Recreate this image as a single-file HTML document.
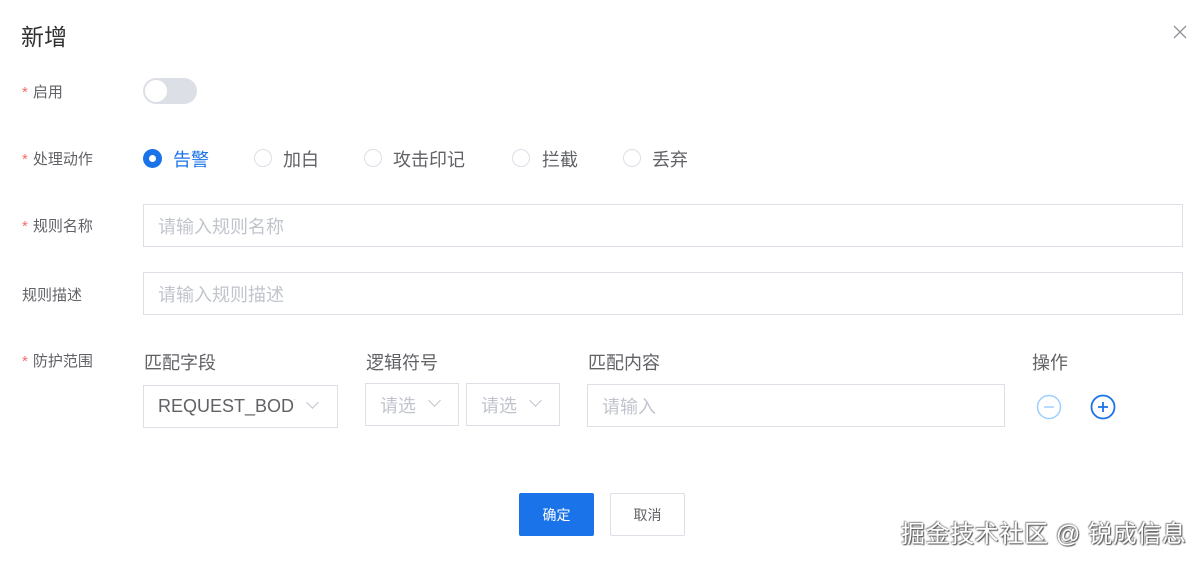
<!DOCTYPE html>
<html><head><meta charset="utf-8"><style>
*{box-sizing:border-box;margin:0;padding:0}
body{width:1204px;height:562px;background:#fff;font-family:"Liberation Sans","Noto Sans CJK SC",sans-serif;color:#606266;position:relative;overflow:hidden}
.a{position:absolute}
.lbl{font-size:15px;color:#606266}
.st{color:#f56c6c;margin-right:5px}
.inp{position:absolute;border:1px solid #dcdfe6;background:#fff;font-size:18px;color:#c0c4cc;padding-left:14px;display:flex;align-items:center}
.rd{position:absolute;width:18px;height:18px;border:1px solid #dcdfe6;border-radius:50%}
.rt{position:absolute;font-size:18px;color:#606266}
.chev{position:absolute;width:9px;height:9px;border-right:1px solid #c0c4cc;border-bottom:1px solid #c0c4cc;transform:rotate(45deg)}
</style></head><body>
<div class="a" style="left:21px;top:18px;font-size:23px;color:#303133">新增</div>
<svg class="a" style="left:1173px;top:25px" width="14" height="14"><path d="M1 1L13 13M13 1L1 13" stroke="#909399" stroke-width="1.3"/></svg>

<div class="a lbl" style="left:22px;top:81px"><span class="st">*</span>启用</div>
<div class="a" style="left:143px;top:78px;width:54px;height:26px;border-radius:13px;background:#dcdfe6"></div>
<div class="a" style="left:145px;top:80px;width:22px;height:22px;border-radius:50%;background:#fff"></div>

<div class="a lbl" style="left:22px;top:148px"><span class="st">*</span>处理动作</div>
<div class="a" style="left:143px;top:149px;width:19px;height:19px;border-radius:50%;background:#1a73e8"></div>
<div class="a" style="left:149px;top:155px;width:7px;height:7px;border-radius:50%;background:#fff"></div>
<div class="rt" style="left:173px;top:146px;color:#1a73e8">告警</div>
<div class="rd" style="left:254px;top:149px"></div><div class="rt" style="left:283px;top:146px">加白</div>
<div class="rd" style="left:364px;top:149px"></div><div class="rt" style="left:393px;top:146px">攻击印记</div>
<div class="rd" style="left:512px;top:149px"></div><div class="rt" style="left:542px;top:146px">拦截</div>
<div class="rd" style="left:623px;top:149px"></div><div class="rt" style="left:652px;top:146px">丢弃</div>

<div class="a lbl" style="left:22px;top:215px"><span class="st">*</span>规则名称</div>
<div class="inp" style="left:143px;top:204px;width:1040px;height:43px">请输入规则名称</div>
<div class="a lbl" style="left:22px;top:284px">规则描述</div>
<div class="inp" style="left:143px;top:272px;width:1040px;height:43px">请输入规则描述</div>

<div class="a lbl" style="left:22px;top:350px"><span class="st">*</span>防护范围</div>
<div class="rt" style="left:144px;top:349px">匹配字段</div>
<div class="rt" style="left:366px;top:349px">逻辑符号</div>
<div class="rt" style="left:588px;top:349px">匹配内容</div>
<div class="rt" style="left:1032px;top:349px">操作</div>

<div class="inp" style="left:143px;top:385px;width:195px;height:43px;color:#606266;overflow:hidden;white-space:nowrap"><span style="width:137px;overflow:hidden;display:inline-block">REQUEST_BODY</span></div>
<div class="chev" style="left:308px;top:398px"></div>
<div class="inp" style="left:365px;top:383px;width:94px;height:43px">请选</div>
<div class="chev" style="left:430px;top:396px"></div>
<div class="inp" style="left:466px;top:383px;width:94px;height:43px">请选</div>
<div class="chev" style="left:531px;top:396px"></div>
<div class="inp" style="left:587px;top:384px;width:418px;height:43px">请输入</div>

<svg class="a" style="left:1036px;top:394px" width="26" height="26"><circle cx="13" cy="13" r="11.5" fill="none" stroke="#a0cfff" stroke-width="1.5"/><path d="M8 13h10" stroke="#a0cfff" stroke-width="1.5"/></svg>
<svg class="a" style="left:1090px;top:394px" width="26" height="26"><circle cx="13" cy="13" r="11.5" fill="none" stroke="#1a73e8" stroke-width="1.8"/><path d="M8 13h10M13 8v10" stroke="#1a73e8" stroke-width="1.8"/></svg>

<div class="a" style="left:519px;top:493px;width:75px;height:43px;background:#1a73e8;color:#fff;font-size:14px;display:flex;align-items:center;justify-content:center;border-radius:2px">确定</div>
<div class="a" style="left:610px;top:493px;width:75px;height:43px;border:1px solid #dcdfe6;color:#606266;font-size:14px;display:flex;align-items:center;justify-content:center;border-radius:2px">取消</div>

<div class="a" style="left:901px;top:514px;font-size:24px;letter-spacing:0.6px;color:#fff;text-shadow:1px 1px 1px #555,-1px -1px 1px #999,0 0 2px #666;white-space:nowrap">掘金技术社区 @ 锐成信息</div>
</body></html>
